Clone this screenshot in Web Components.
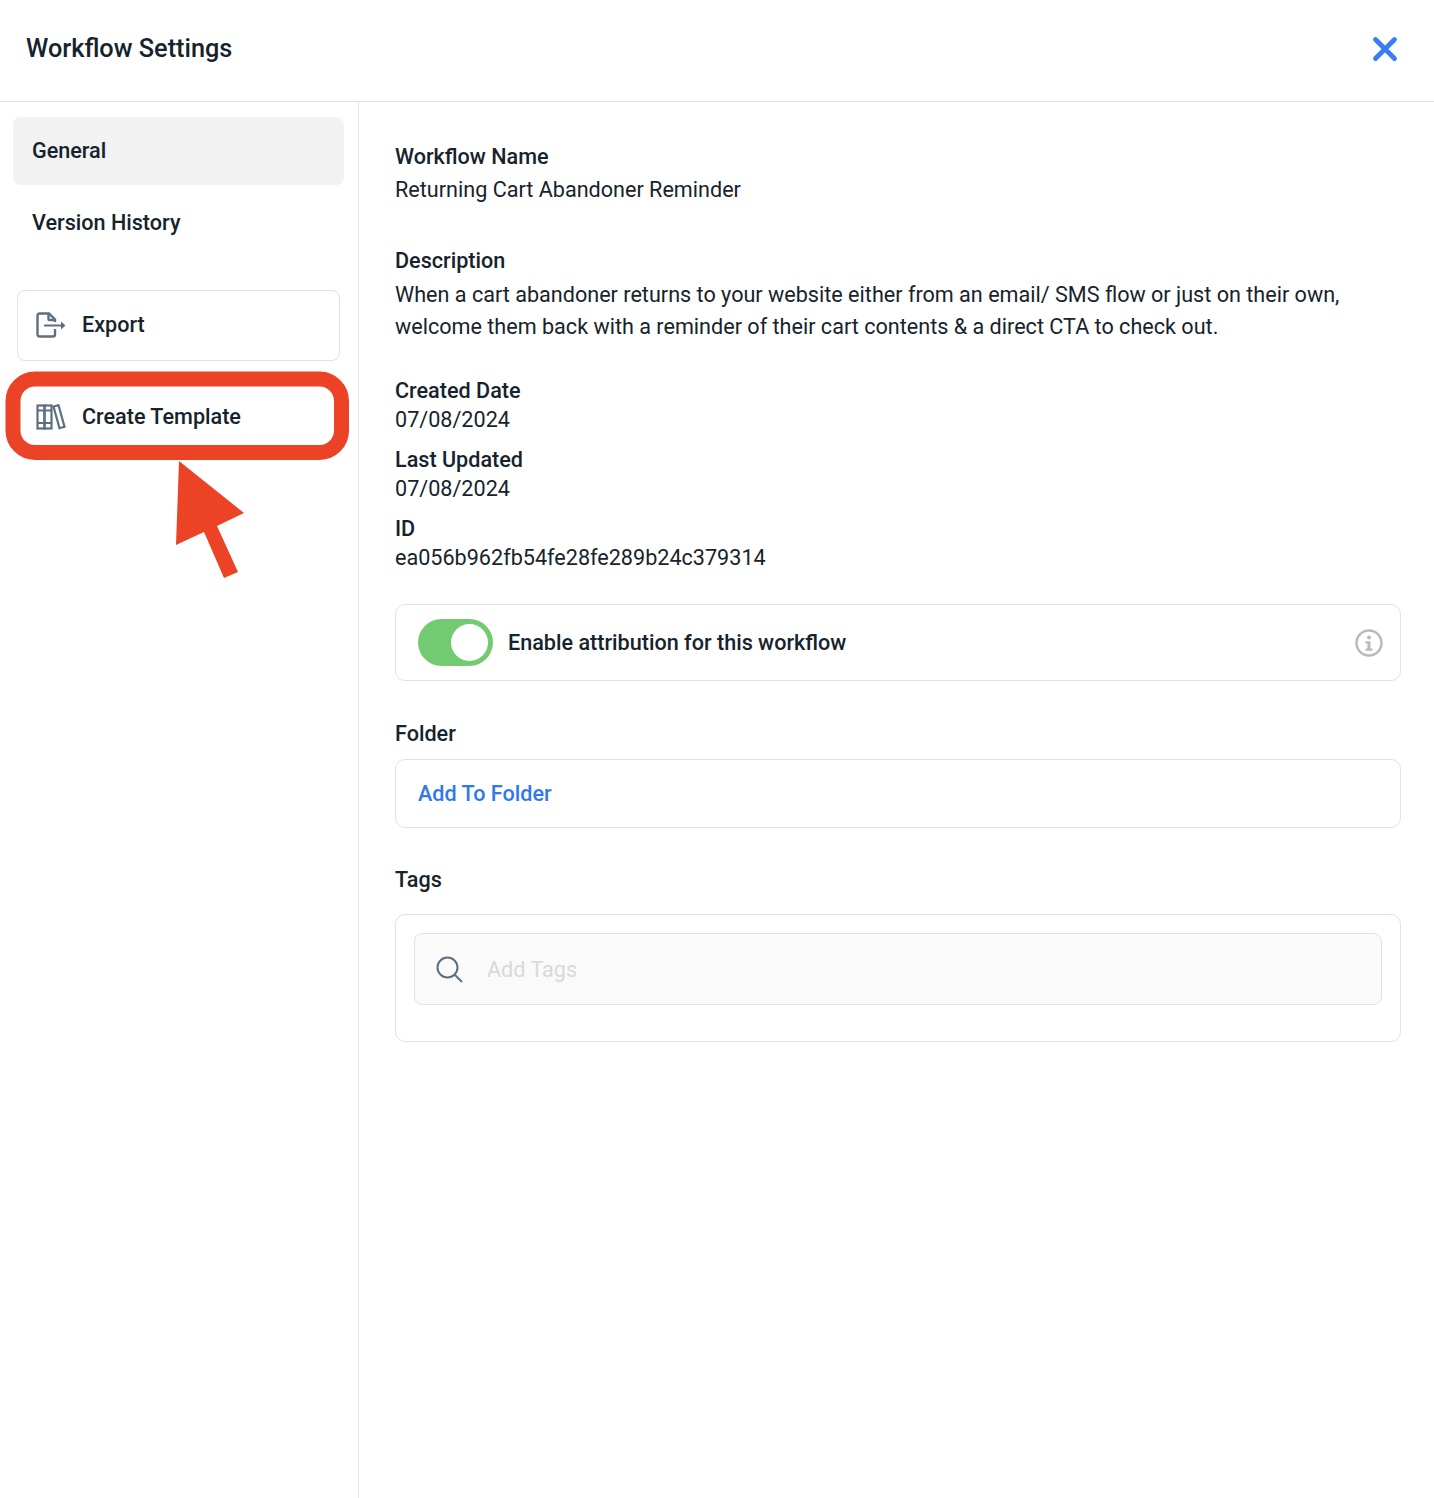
<!DOCTYPE html>
<html>
<head>
<meta charset="utf-8">
<title>Workflow Settings</title>
<style>
html, body { margin: 0; padding: 0; background: #fff; }
body { font-family: Roboto, "Liberation Sans", sans-serif; color: #17232c; }
</style>
</head>
<body>
<workflow-settings>
  <settings-header slot="header">Workflow Settings</settings-header>

  <settings-nav slot="nav">
    <nav-item active>General</nav-item>
    <nav-item>Version History</nav-item>
    <nav-button style="margin-top:29px">
      <svg slot="icon" width="30" height="26" viewBox="0 0 30 26" fill="none" stroke="#5f6f7f" stroke-width="2.400">
        <path d="M19 17v5.500a2 2 0 0 1-2 2H3.500a2 2 0 0 1-2-2V3.500a2 2 0 0 1 2-2h9.500l6 6v2.500"/>
        <path d="M12.500 1.500v5.500a1 1 0 0 0 1 1H19"/>
        <path d="M8 13.500h18" stroke-width="2"/>
        <path d="M25 9.500l4.500 4-4.500 4z" fill="#5f6f7f" stroke="none"/>
      </svg>
      Export
    </nav-button>
    <nav-button style="margin-top:21px">
      <svg slot="icon" width="30" height="26" viewBox="0 0 30 26" fill="none" stroke="#5f6f7f" stroke-width="2.200">
        <rect x="1.500" y="1.500" width="7" height="23"/>
        <rect x="8.500" y="1.500" width="7" height="23"/>
        <path d="M1.500 6.500h14M1.500 19h14"/>
        <path d="M17.500 2.500l5-1.300 6 21.500-5 1.500z"/>
      </svg>
      Create Template
    </nav-button>
  </settings-nav>

  <info-field label="Workflow Name" gap="4" style="margin-top:42px">Returning Cart Abandoner Reminder</info-field>
  <info-field label="Description" gap="5" style="margin-top:42px">When a cart abandoner returns to your website either from an email/ SMS flow or just on their own,<br>welcome them back with a reminder of their cart contents &amp; a direct CTA to check out.</info-field>
  <info-field label="Created Date" style="margin-top:35px">07/08/2024</info-field>
  <info-field label="Last Updated" style="margin-top:11px">07/08/2024</info-field>
  <info-field label="ID" style="margin-top:11px">ea056b962fb54fe28fe289b24c379314</info-field>

  <attribution-row style="margin-top:30px">Enable attribution for this workflow</attribution-row>

  <section-label style="margin-top:40px">Folder</section-label>
  <folder-box style="margin-top:12px">Add To Folder</folder-box>

  <section-label style="margin-top:39px">Tags</section-label>
  <tags-box style="margin-top:21px" placeholder="Add Tags"></tags-box>

  <callout-mark slot="overlay"></callout-mark>
</workflow-settings>

<script>
const rootTemplate = document.createElement("template");
rootTemplate.innerHTML = `
<style>
:host { display: block; position: relative; width: 1434px; height: 1498px; overflow: hidden; background: #fff; }
#body { display: flex; height: 1396px; border-top: 1px solid #e2e2e2; }
#nav { flex: 0 0 359px; box-sizing: border-box; border-right: 1px solid #e2e2e2; }
#main { flex: 1; min-width: 0; box-sizing: border-box; padding: 0 33px 0 36px; display: flex; flex-direction: column; align-items: stretch; }
</style>
<slot name="header"></slot>
<div id="body">
  <div id="nav"><slot name="nav"></slot></div>
  <div id="main"><slot></slot></div>
</div>
<slot name="overlay"></slot>
`;

class WorkflowSettings extends HTMLElement {
  constructor() {
    super();
    this.attachShadow({mode: "open"});
    this.shadowRoot.appendChild(rootTemplate.content.cloneNode(true));
  }
}

class SettingsHeader extends HTMLElement {
  constructor() {
    super();
    this.attachShadow({mode: "open"});
    this.shadowRoot.innerHTML = `
<style>
:host { display: flex; align-items: center; justify-content: space-between; height: 101px; box-sizing: border-box; padding: 0 36px 4px 26px; }
h1 { margin: 0; font-size: 25.300px; font-weight: 500; }
svg { display: block; }
</style>
<h1><slot></slot></h1>
<svg width="26" height="26" viewBox="0 0 26 26"><path d="M3.500 3.500l19 19M22.500 3.500l-19 19" stroke="#3a7cf5" stroke-width="4.800" stroke-linecap="round"/></svg>
`;
  }
}

class SettingsNav extends HTMLElement {
  constructor() {
    super();
    this.attachShadow({mode: "open"});
    this.shadowRoot.innerHTML = `
<style>
:host { display: flex; flex-direction: column; padding: 15px 14px 0 13px; }
</style>
<slot></slot>
`;
  }
}

class NavItem extends HTMLElement {
  constructor() {
    super();
    this.attachShadow({mode: "open"});
    this.shadowRoot.innerHTML = `
<style>
:host { display: flex; align-items: center; height: 68px; box-sizing: border-box; padding: 0 0 2px 19px; margin-bottom: 4px; border-radius: 8px; font-size: 21.600px; font-weight: 500; }
:host([active]) { background: #f2f2f2; }
</style>
<slot></slot>
`;
  }
}

class NavButton extends HTMLElement {
  constructor() {
    super();
    this.attachShadow({mode: "open"});
    this.shadowRoot.innerHTML = `
<style>
:host { display: flex; align-items: center; gap: 16px; height: 71px; box-sizing: border-box; margin: 0 4px; padding: 0 0 2px 18px; border: 1px solid #e2e2e2; border-radius: 8px; background: #fff; font-size: 21.600px; font-weight: 500; }
::slotted(svg) { flex: none; display: block; }
</style>
<slot name="icon"></slot>
<slot></slot>
`;
  }
}

class InfoField extends HTMLElement {
  constructor() {
    super();
    this.attachShadow({mode: "open"});
    this.shadowRoot.innerHTML = `
<style>
:host { display: block; font-size: 21.600px; }
#label { font-weight: 500; line-height: 26px; }
#value { line-height: 32px; font-weight: 400; }
</style>
<div id="label"></div>
<div id="value"><slot></slot></div>
`;
    this.labelEl = this.shadowRoot.querySelector("#label");
    this.valueEl = this.shadowRoot.querySelector("#value");
  }
  connectedCallback() {
    this.labelEl.textContent = this.getAttribute("label");
    this.valueEl.style.marginTop = (this.getAttribute("gap") || 0) + "px";
  }
}

class AttributionRow extends HTMLElement {
  constructor() {
    super();
    this.attachShadow({mode: "open"});
    this.shadowRoot.innerHTML = `
<style>
:host { display: flex; align-items: center; height: 77px; box-sizing: border-box; padding: 0 17px 0 22px; border: 1px solid #e2e2e2; border-radius: 10px; font-size: 21.600px; font-weight: 500; }
#toggle { flex: none; width: 75px; height: 47px; border-radius: 24px; background: #73cb71; position: relative; margin-right: 15px; }
#knob { position: absolute; top: 5px; right: 5px; width: 37px; height: 37px; border-radius: 50%; background: #fff; }
#text { flex: 1; }
svg { display: block; }
</style>
<div id="toggle"><div id="knob"></div></div>
<div id="text"><slot></slot></div>
<svg width="28" height="28" viewBox="0 0 28 28" fill="none">
  <circle cx="14" cy="14" r="12.500" stroke="#b9b9b9" stroke-width="2.400"/>
  <circle cx="14" cy="8.500" r="2" fill="#b9b9b9"/>
  <path d="M10.500 12.300h5v7.200h2v2.200h-7v-2.200h2v-5h-2z" fill="#b9b9b9"/>
</svg>
`;
  }
}

class SectionLabel extends HTMLElement {
  constructor() {
    super();
    this.attachShadow({mode: "open"});
    this.shadowRoot.innerHTML = `
<style>
:host { display: block; font-size: 21.600px; font-weight: 500; line-height: 26px; }
</style>
<slot></slot>
`;
  }
}

class FolderBox extends HTMLElement {
  constructor() {
    super();
    this.attachShadow({mode: "open"});
    this.shadowRoot.innerHTML = `
<style>
:host { display: flex; align-items: center; height: 69px; box-sizing: border-box; padding-left: 22px; border: 1px solid #e2e2e2; border-radius: 10px; font-size: 21.600px; font-weight: 500; color: #2f78f0; }
</style>
<slot></slot>
`;
  }
}

class TagsBox extends HTMLElement {
  constructor() {
    super();
    this.attachShadow({mode: "open"});
    this.shadowRoot.innerHTML = `
<style>
:host { display: block; height: 128px; box-sizing: border-box; padding: 18px; border: 1px solid #e2e2e2; border-radius: 10px; }
#input { display: flex; align-items: center; height: 72px; box-sizing: border-box; padding-left: 21px; gap: 24px; background: #fafafa; border: 1px solid #e2e2e2; border-radius: 8px; font-size: 21.600px; color: #d9d9d9; }
svg { display: block; flex: none; }
</style>
<div id="input">
  <svg width="27" height="27" viewBox="0 0 27 27" fill="none" stroke="#5f6f7f" stroke-width="2"><circle cx="11.500" cy="11.500" r="10"/><path d="M18.500 18.500l7.500 7.500"/></svg>
  <span id="placeholder"></span>
</div>
`;
  }
  connectedCallback() {
    this.shadowRoot.querySelector("#placeholder").textContent = this.getAttribute("placeholder");
  }
}

class CalloutMark extends HTMLElement {
  constructor() {
    super();
    this.attachShadow({mode: "open"});
    this.shadowRoot.innerHTML = `
<style>
:host { position: absolute; left: 0; top: 0; width: 400px; height: 600px; pointer-events: none; }
svg { display: block; }
</style>
<svg width="400" height="600" viewBox="0 0 400 600">
  <rect x="13" y="379" width="328.500" height="73.500" rx="22" fill="none" stroke="#ec4326" stroke-width="15"/>
  <path d="M179 461L244 513 217 526 238 572 224 578 204 532 176 545z" fill="#ec4326"/>
</svg>
`;
  }
}

customElements.define("workflow-settings", WorkflowSettings);
customElements.define("settings-header", SettingsHeader);
customElements.define("settings-nav", SettingsNav);
customElements.define("nav-item", NavItem);
customElements.define("nav-button", NavButton);
customElements.define("info-field", InfoField);
customElements.define("attribution-row", AttributionRow);
customElements.define("section-label", SectionLabel);
customElements.define("folder-box", FolderBox);
customElements.define("tags-box", TagsBox);
customElements.define("callout-mark", CalloutMark);
</script>
</body>
</html>
